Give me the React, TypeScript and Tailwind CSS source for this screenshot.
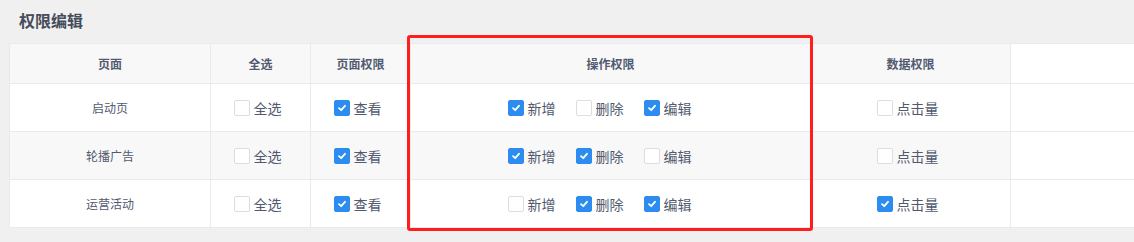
import { Fragment } from "react";

type Perm = { label: string; checked: boolean };
type Row = {
  page: string;
  all: boolean;
  view: boolean;
  ops: Perm[];
  clicks: boolean;
};

const rows: Row[] = [
  {
    page: "启动页",
    all: false,
    view: true,
    ops: [
      { label: "新增", checked: true },
      { label: "删除", checked: false },
      { label: "编辑", checked: true },
    ],
    clicks: false,
  },
  {
    page: "轮播广告",
    all: false,
    view: true,
    ops: [
      { label: "新增", checked: true },
      { label: "删除", checked: true },
      { label: "编辑", checked: false },
    ],
    clicks: false,
  },
  {
    page: "运营活动",
    all: false,
    view: true,
    ops: [
      { label: "新增", checked: false },
      { label: "删除", checked: true },
      { label: "编辑", checked: true },
    ],
    clicks: true,
  },
];

function Checkbox({ label, checked }: { label: string; checked: boolean }) {
  return (
    <div className="flex items-center">
      <div
        className={
          checked
            ? "flex h-4 w-4 shrink-0 items-center justify-center rounded-[2px] border border-[#2d8cf0] bg-[#2d8cf0]"
            : "flex h-4 w-4 shrink-0 items-center justify-center rounded-[2px] border border-[#dcdee2] bg-white"
        }
      >
        {checked && (
          <svg width="10" height="10" viewBox="0 0 10 10" className="block">
            <path
              d="M2 5.2 L4.2 7.2 L8 2.8"
              fill="none"
              stroke="white"
              strokeWidth="1.8"
              strokeLinecap="round"
              strokeLinejoin="round"
            />
          </svg>
        )}
      </div>
      <span className="ml-[4px] text-[14px] leading-[20px] text-[#515a6e]">{label}</span>
    </div>
  );
}

export default function App() {
  const cell = "flex items-center justify-center border-r border-[#e8eaec]";
  return (
    <div
      className="relative min-h-[242px] w-full bg-[#f0f0f0]"
      style={{ fontFamily: '"Noto Sans CJK SC", "Noto Sans", sans-serif' }}
    >
      <div className="h-[43px] pl-[19px] pt-[9px] text-[16px] font-bold leading-[22px] text-[#464c5b]">
        权限编辑
      </div>
      <div className="ml-[9px] border-y border-l border-[#e8eaec] bg-white">
        <div className="flex h-[40px] border-b border-[#e8eaec] text-[12px] font-bold text-[#515a6e]">
          <div className={`${cell} w-[201px] bg-[#f8f8f9]`}>页面</div>
          <div className={`${cell} w-[100px] bg-[#f8f8f9]`}>全选</div>
          <div className={`${cell} w-[100px] bg-[#f8f8f9]`}>页面权限</div>
          <div className={`${cell} w-[400px] bg-[#f8f8f9]`}>操作权限</div>
          <div className={`${cell} w-[200px] bg-[#f8f8f9]`}>数据权限</div>
        </div>
        {rows.map((r, i) => (
          <Fragment key={r.page}>
            <div
              className={
                i === rows.length - 1
                  ? "flex h-[47px]"
                  : "flex h-[48px] border-b border-[#e8eaec]"
              }
            >
              <div
                className={`${cell} w-[201px] text-[12px] text-[#515a6e] ${i === 1 ? "bg-[#f8f8f9]" : ""}`}
              >
                {r.page}
              </div>
              <div className={`${cell} w-[100px] pr-[6px] ${i === 1 ? "bg-[#f8f8f9]" : ""}`}>
                <Checkbox label="全选" checked={r.all} />
              </div>
              <div className={`${cell} w-[100px] pr-[6px] ${i === 1 ? "bg-[#f8f8f9]" : ""}`}>
                <Checkbox label="查看" checked={r.view} />
              </div>
              <div className={`${cell} w-[400px] pr-[2px] ${i === 1 ? "bg-[#f8f8f9]" : ""}`}>
                {r.ops.map((o) => (
                  <div key={o.label} className="mr-5 flex items-center">
                    <Checkbox label={o.label} checked={o.checked} />
                  </div>
                ))}
              </div>
              <div className={`${cell} w-[200px] pr-[6px] ${i === 1 ? "bg-[#f8f8f9]" : ""}`}>
                <Checkbox label="点击量" checked={r.clicks} />
              </div>
            </div>
          </Fragment>
        ))}
      </div>
      <div className="pointer-events-none absolute left-[407px] top-[35px] h-[196px] w-[406px] rounded-[3px] border-[3px] border-[#ff1d1d]" />
    </div>
  );
}
